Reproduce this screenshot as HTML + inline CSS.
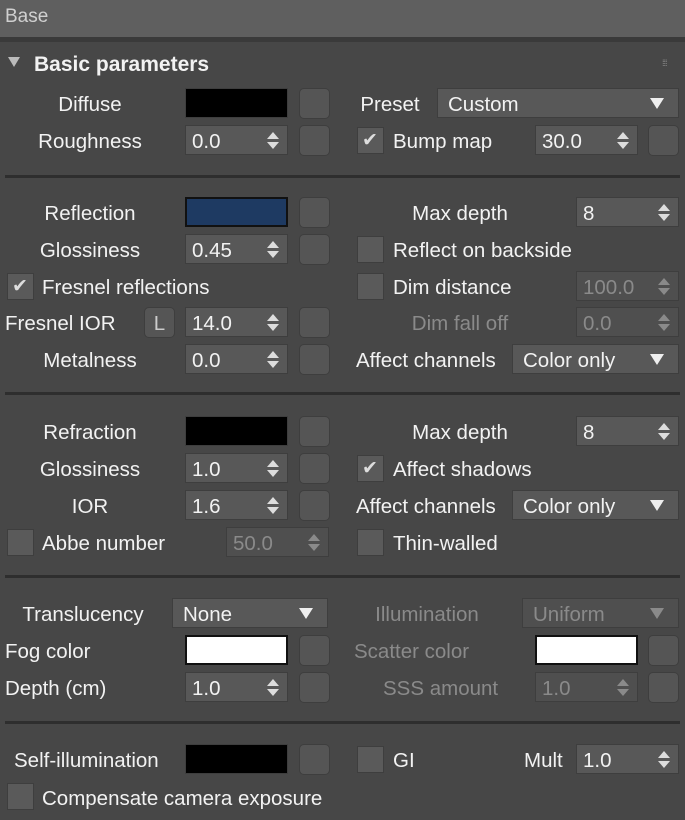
<!DOCTYPE html>
<html><head><style>
body{margin:0;width:685px;height:820px;background:#474747;font-family:"Liberation Sans",sans-serif;font-size:20.5px;color:#f2f2f2;position:relative;overflow:hidden}
div{position:absolute;box-sizing:border-box}
.hdr{left:0;top:0;width:685px;height:37px;background:#5f5f5f;color:#d0d0d0;font-size:19px;padding:6px 0 0 5px}
.hb{left:0;top:37px;width:685px;height:5px;background:#3a3a3a}
.t{height:30px;line-height:34px;white-space:nowrap}
.c{text-align:center}
.f{height:30px;background:#585858;border:1px solid #3e3e3e;line-height:31px;padding-left:6px}
.f.dis{color:#8a8a8a;background:#4f4f4f}
.sp::after{content:"";position:absolute;right:8px;top:6px;border:6px solid transparent;border-bottom:7px solid #ddd;border-top:0}
.sp::before{content:"";position:absolute;right:8px;top:16px;border:6px solid transparent;border-top:7px solid #ddd;border-bottom:0}
.sp.dis::after{border-bottom-color:#8a8a8a}.sp.dis::before{border-top-color:#8a8a8a}
.dd{padding-left:10px}
.dd::after{content:"";position:absolute;right:14px;top:9px;border:7px solid transparent;border-top:11px solid #eee;border-bottom:0}
.dd.dis::after{border-top-color:#8a8a8a}
.b{width:31px;height:31px;background:#555;border:1px solid #3e3e3e;border-radius:5px}
.cb{width:27px;height:27px;background:#5a5a5a;border:1px solid #3e3e3e}
.ck::after{content:"✔";position:absolute;left:4px;top:0;font-size:19px;color:#ddd;line-height:25px}
.sep{left:5px;width:675px;height:3px;background:#2e2e2e}
.g{color:#8a8a8a}
.col{background:#000}
</style></head><body>
<div class="hdr">Base</div><div class="hb"></div>
<div style="left:8px;top:57px;border:6px solid transparent;border-top:10px solid #bbb"></div>
<div class="t" style="left:34px;top:48px;font-weight:bold;font-size:21px">Basic parameters</div>
<div style="left:662px;top:58px;color:#888;font-size:9px;letter-spacing:-1px">⁞⁞⁞</div>

<div class="t c" style="left:0;width:180px;top:88px">Diffuse</div>
<div class="f col" style="left:185px;top:88px;width:103px"></div><div class="b" style="left:299px;top:88px"></div>
<div class="t c" style="left:340px;width:100px;top:88px">Preset</div>
<div class="f dd" style="left:437px;top:88px;width:242px">Custom</div>
<div class="t c" style="left:0;width:180px;top:125px">Roughness</div>
<div class="f sp" style="left:185px;top:125px;width:103px">0.0</div><div class="b" style="left:299px;top:125px"></div>
<div class="cb ck" style="left:357px;top:127px"></div><div class="t" style="left:393px;top:125px">Bump map</div>
<div class="f sp" style="left:535px;top:125px;width:103px">30.0</div><div class="b" style="left:648px;top:125px"></div>
<div class="sep" style="top:175px"></div>

<div class="t c" style="left:0;width:180px;top:197px">Reflection</div>
<div class="f" style="left:185px;top:197px;width:103px;background:#1e3a62;border:2px solid #111"></div><div class="b" style="left:299px;top:197px"></div>
<div class="t c" style="left:410px;width:100px;top:197px">Max depth</div>
<div class="f sp" style="left:576px;top:197px;width:103px">8</div>
<div class="t c" style="left:0;width:180px;top:234px">Glossiness</div>
<div class="f sp" style="left:185px;top:234px;width:103px">0.45</div><div class="b" style="left:299px;top:234px"></div>
<div class="cb" style="left:357px;top:236px"></div><div class="t" style="left:393px;top:234px">Reflect on backside</div>
<div class="cb ck" style="left:7px;top:273px"></div><div class="t" style="left:42px;top:271px">Fresnel reflections</div>
<div class="cb" style="left:357px;top:273px"></div><div class="t" style="left:393px;top:271px">Dim distance</div>
<div class="f sp dis" style="left:576px;top:271px;width:103px">100.0</div>
<div class="t" style="left:5px;top:307px">Fresnel IOR</div>
<div class="b" style="left:144px;top:307px;color:#ccc;text-align:center;line-height:31px">L</div>
<div class="f sp" style="left:185px;top:307px;width:103px">14.0</div><div class="b" style="left:299px;top:307px"></div>
<div class="t c g" style="left:410px;width:100px;top:307px">Dim fall off</div>
<div class="f sp dis" style="left:576px;top:307px;width:103px">0.0</div>
<div class="t c" style="left:0;width:180px;top:344px">Metalness</div>
<div class="f sp" style="left:185px;top:344px;width:103px">0.0</div><div class="b" style="left:299px;top:344px"></div>
<div class="t" style="left:356px;top:344px">Affect channels</div>
<div class="f dd" style="left:512px;top:344px;width:167px">Color only</div>
<div class="sep" style="top:392px"></div>

<div class="t c" style="left:0;width:180px;top:416px">Refraction</div>
<div class="f col" style="left:185px;top:416px;width:103px"></div><div class="b" style="left:299px;top:416px"></div>
<div class="t c" style="left:410px;width:100px;top:416px">Max depth</div>
<div class="f sp" style="left:576px;top:416px;width:103px">8</div>
<div class="t c" style="left:0;width:180px;top:453px">Glossiness</div>
<div class="f sp" style="left:185px;top:453px;width:103px">1.0</div><div class="b" style="left:299px;top:453px"></div>
<div class="cb ck" style="left:357px;top:455px"></div><div class="t" style="left:393px;top:453px">Affect shadows</div>
<div class="t c" style="left:0;width:180px;top:490px">IOR</div>
<div class="f sp" style="left:185px;top:490px;width:103px">1.6</div><div class="b" style="left:299px;top:490px"></div>
<div class="t" style="left:356px;top:490px">Affect channels</div>
<div class="f dd" style="left:512px;top:490px;width:167px">Color only</div>
<div class="cb" style="left:7px;top:529px"></div><div class="t" style="left:42px;top:527px">Abbe number</div>
<div class="f sp dis" style="left:226px;top:527px;width:103px">50.0</div>
<div class="cb" style="left:357px;top:529px"></div><div class="t" style="left:393px;top:527px">Thin-walled</div>
<div class="sep" style="top:575px"></div>

<div class="t c" style="left:0;width:166px;top:598px">Translucency</div>
<div class="f dd" style="left:172px;top:598px;width:156px">None</div>
<div class="t c g" style="left:360px;width:134px;top:598px">Illumination</div>
<div class="f dd dis" style="left:522px;top:598px;width:157px">Uniform</div>
<div class="t" style="left:5px;top:635px">Fog color</div>
<div class="f" style="left:185px;top:635px;width:103px;background:#fff;border:2px solid #111"></div><div class="b" style="left:299px;top:635px"></div>
<div class="t g" style="left:354px;top:635px">Scatter color</div>
<div class="f" style="left:535px;top:635px;width:103px;background:#fff;border:2px solid #111"></div><div class="b" style="left:648px;top:635px"></div>
<div class="t" style="left:5px;top:672px">Depth (cm)</div>
<div class="f sp" style="left:185px;top:672px;width:103px">1.0</div><div class="b" style="left:299px;top:672px"></div>
<div class="t g" style="left:383px;top:672px">SSS amount</div>
<div class="f sp dis" style="left:535px;top:672px;width:103px">1.0</div><div class="b" style="left:648px;top:672px"></div>
<div class="sep" style="top:721px"></div>

<div class="t" style="left:14px;top:744px">Self-illumination</div>
<div class="f col" style="left:185px;top:744px;width:103px"></div><div class="b" style="left:299px;top:744px"></div>
<div class="cb" style="left:357px;top:746px"></div><div class="t" style="left:393px;top:744px">GI</div>
<div class="t" style="left:524px;top:744px">Mult</div>
<div class="f sp" style="left:576px;top:744px;width:103px">1.0</div>
<div class="cb" style="left:7px;top:783px"></div><div class="t" style="left:42px;top:782px">Compensate camera exposure</div>
</body></html>
